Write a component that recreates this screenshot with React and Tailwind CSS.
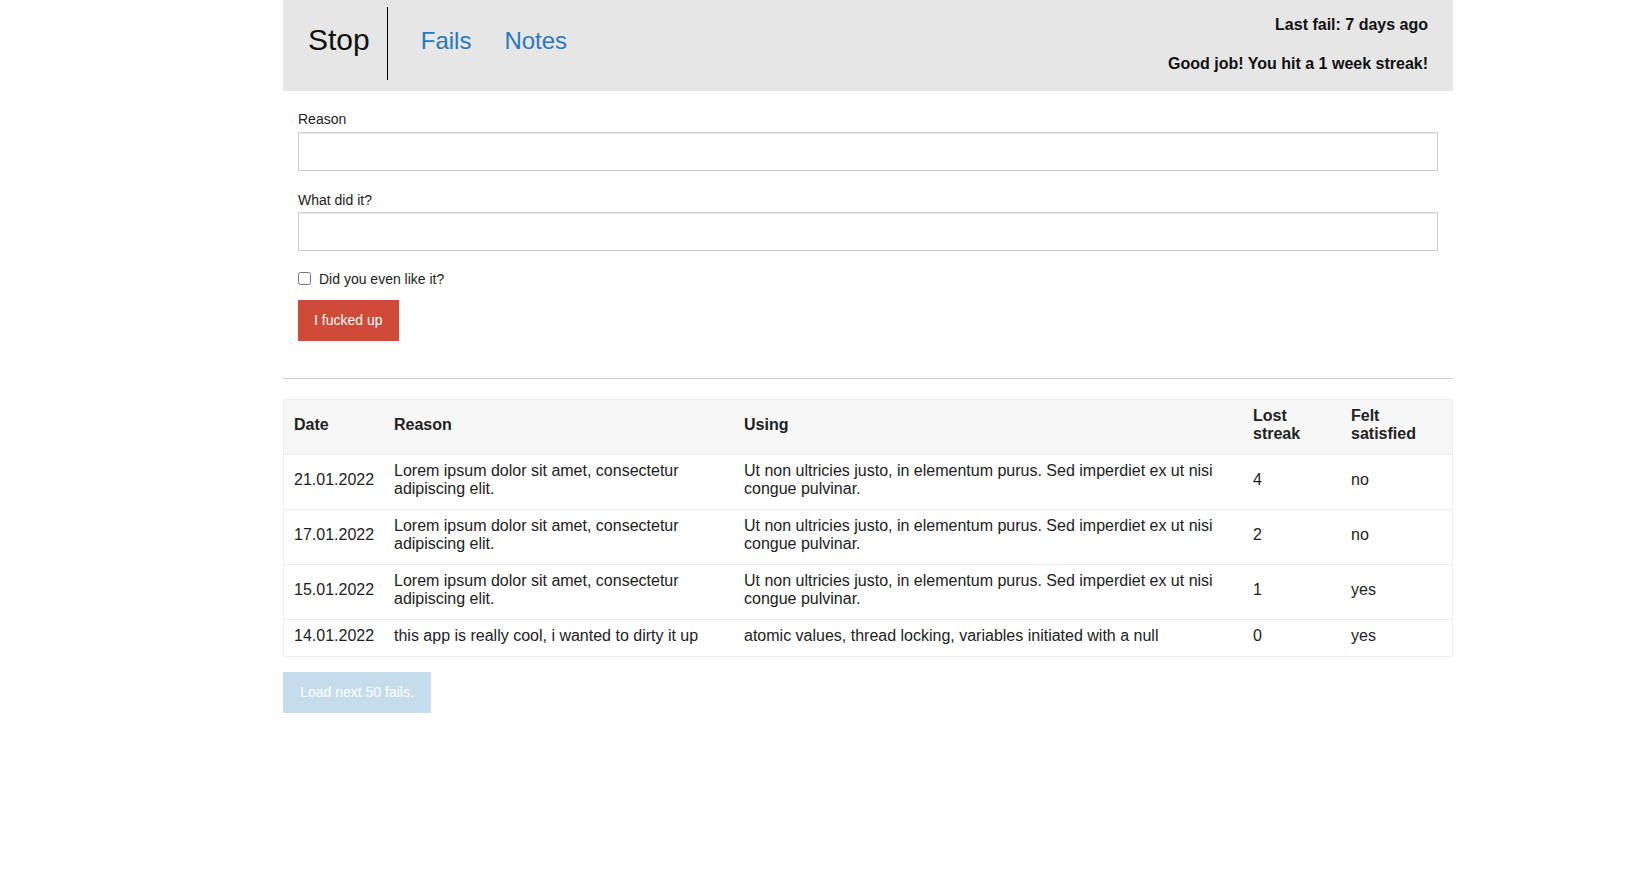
import { useState } from 'react';

const fails = [
  {
    date: '21.01.2022',
    reason: 'Lorem ipsum dolor sit amet, consectetur adipiscing elit.',
    using: 'Ut non ultricies justo, in elementum purus. Sed imperdiet ex ut nisi congue pulvinar.',
    lost: 4,
    satisfied: 'no'
  },
  {
    date: '17.01.2022',
    reason: 'Lorem ipsum dolor sit amet, consectetur adipiscing elit.',
    using: 'Ut non ultricies justo, in elementum purus. Sed imperdiet ex ut nisi congue pulvinar.',
    lost: 2,
    satisfied: 'no'
  },
  {
    date: '15.01.2022',
    reason: 'Lorem ipsum dolor sit amet, consectetur adipiscing elit.',
    using: 'Ut non ultricies justo, in elementum purus. Sed imperdiet ex ut nisi congue pulvinar.',
    lost: 1,
    satisfied: 'yes'
  },
  {
    date: '14.01.2022',
    reason: 'this app is really cool, i wanted to dirty it up',
    using: 'atomic values, thread locking, variables initiated with a null',
    lost: 0,
    satisfied: 'yes'
  }
];

function Header() {
  return (
    <header className="h-[91px] bg-[#e6e6e6] flex justify-between">
      <nav className="flex items-start pt-[7px] pl-[25px]">
        <div className="h-[73px] flex items-center border-r border-black pr-[17px]">
          <span className="text-[30px] leading-[34px] text-[#111] pb-2">Stop</span>
        </div>
        <div className="h-[73px] flex items-center gap-[33px] ml-[33px]">
          <a href="#" className="text-[24px] leading-[28px] text-[#2679be] pb-[6px]">Fails</a>
          <a href="#" className="text-[24px] leading-[28px] text-[#2679be] pb-[6px]">Notes</a>
        </div>
      </nav>
      <div className="flex flex-col items-end pt-[16px] pr-[25px] text-[16px] leading-[18px] font-bold text-[#111]">
        <p>Last fail: 7 days ago</p>
        <p className="mt-[21px]">Good job! You hit a 1 week streak!</p>
      </div>
    </header>
  );
}

function FailForm() {
  const [liked, setLiked] = useState(false);
  return (
    <form className="px-[15px] pt-[18px]" onSubmit={(e) => e.preventDefault()}>
      <label className="block text-[14px] leading-[20px] text-[#222] mb-[3px]">Reason</label>
      <input className="block w-full h-[39px] bg-white border border-[#ccc] shadow-[inset_0_1px_1px_rgba(0,0,0,0.075)] px-3 text-[14px] outline-none" />
      <label className="block text-[14px] leading-[20px] text-[#222] mt-[19px] mb-[2px]">What did it?</label>
      <input className="block w-full h-[39px] bg-white border border-[#ccc] shadow-[inset_0_1px_1px_rgba(0,0,0,0.075)] px-3 text-[14px] outline-none" />
      <label className="flex items-center mt-[18px] h-[20px] text-[14px] leading-[20px] text-[#222]">
        <input
          type="checkbox"
          checked={liked}
          onChange={(e) => setLiked(e.target.checked)}
          className="w-[13px] h-[13px] m-0 mr-[8px] mb-[1px]"
        />
        Did you even like it?
      </label>
      <button className="mt-[11px] h-[41px] px-4 bg-[#cd4b37] text-white text-[14px]">I fucked up</button>
    </form>
  );
}

function FailTable() {
  return (
    <div className="mt-[20px] border border-[#eee]">
      <table className="w-full table-fixed text-[16px] leading-[18px] text-[#222]">
        <colgroup>
          <col className="w-[100px]" />
          <col className="w-[350px]" />
          <col className="w-[509px]" />
          <col className="w-[98px]" />
          <col />
        </colgroup>
        <thead className="bg-[#f7f7f7]">
          <tr className="h-[54px]">
            <th className="px-[10px] pb-[4px] text-left font-bold align-middle">Date</th>
            <th className="px-[10px] pb-[4px] text-left font-bold align-middle">Reason</th>
            <th className="px-[10px] pb-[4px] text-left font-bold align-middle">Using</th>
            <th className="px-[10px] pb-[4px] text-left font-bold align-middle">Lost streak</th>
            <th className="px-[10px] pb-[4px] text-left font-bold align-middle">Felt satisfied</th>
          </tr>
        </thead>
        <tbody>
          {fails.map((f, i) => (
            <tr key={i} className="border-t border-[#eee] bg-white">
              <td className="px-[10px] pt-[7px] pb-[11px] align-middle">{f.date}</td>
              <td className="px-[10px] pt-[7px] pb-[11px] align-middle">{f.reason}</td>
              <td className="px-[10px] pt-[7px] pb-[11px] align-middle">{f.using}</td>
              <td className="px-[10px] pt-[7px] pb-[11px] align-middle">{f.lost}</td>
              <td className="px-[10px] pt-[7px] pb-[11px] align-middle">{f.satisfied}</td>
            </tr>
          ))}
        </tbody>
      </table>
    </div>
  );
}

export default function App() {
  return (
    <div className="min-h-screen bg-[#fefefe] font-['Liberation_Sans',Arial,sans-serif]">
      <div className="w-[1170px] ml-[283px]">
        <Header />
        <FailForm />
        <hr className="mt-[37px] border-0 border-t border-[#ccc]" />
        <FailTable />
        <button
          disabled
          className="mt-[15px] w-[148px] h-[41px] bg-[#c5dcec] text-white text-[14px]"
        >
          Load next 50 fails.
        </button>
      </div>
    </div>
  );
}
